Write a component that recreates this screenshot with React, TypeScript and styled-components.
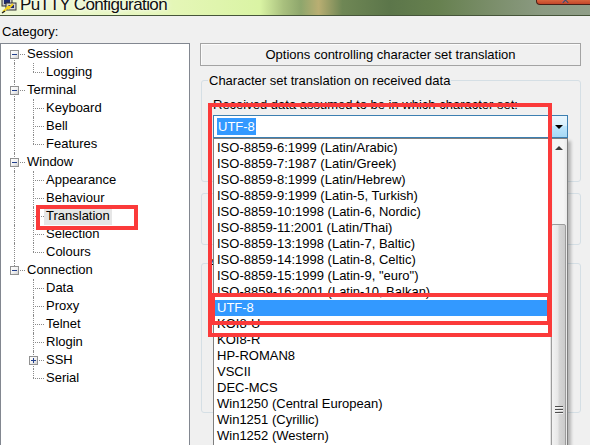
import React from "react";
import styled, { createGlobalStyle } from "styled-components";

type TreeNode = { label: string; children: string[] };

const tree: TreeNode[] = [
  { label: "Session", children: ["Logging"] },
  { label: "Terminal", children: ["Keyboard", "Bell", "Features"] },
  {
    label: "Window",
    children: ["Appearance", "Behaviour", "Translation", "Selection", "Colours"],
  },
  {
    label: "Connection",
    children: ["Data", "Proxy", "Telnet", "Rlogin", "SSH", "Serial"],
  },
];

const collapsed = ["SSH"];
const selectedNode = "Translation";

const charsets = [
  "ISO-8859-6:1999 (Latin/Arabic)",
  "ISO-8859-7:1987 (Latin/Greek)",
  "ISO-8859-8:1999 (Latin/Hebrew)",
  "ISO-8859-9:1999 (Latin-5, Turkish)",
  "ISO-8859-10:1998 (Latin-6, Nordic)",
  "ISO-8859-11:2001 (Latin/Thai)",
  "ISO-8859-13:1998 (Latin-7, Baltic)",
  "ISO-8859-14:1998 (Latin-8, Celtic)",
  'ISO-8859-15:1999 (Latin-9, "euro")',
  "ISO-8859-16:2001 (Latin-10, Balkan)",
  "UTF-8",
  "KOI8-U",
  "KOI8-R",
  "HP-ROMAN8",
  "VSCII",
  "DEC-MCS",
  "Win1250 (Central European)",
  "Win1251 (Cyrillic)",
  "Win1252 (Western)",
  "Win1253 (Greek)",
  "Win1254 (Turkish)",
];

const current = "UTF-8";

const PuttyIcon = () => (
  <svg width="16" height="16" viewBox="0 0 16 16">
    <rect x="1" y="-2" width="10" height="8" fill="#c9c9c9" stroke="#333" />
    <rect x="3" y="0" width="6" height="4" fill="#1d2a6e" />
    <rect x="5" y="3" width="10" height="7" fill="#d6d6d6" stroke="#333" />
    <rect x="7" y="5" width="6" height="3" fill="#1d2a6e" />
    <path d="M2 12 L8 6 L7 9 L12 4" stroke="#f5d21c" strokeWidth="2" fill="none" />
    <path d="M1 13 L4 11" stroke="#222" strokeWidth="1.4" />
  </svg>
);

const App = () => {
  return (
    <Window>
      <GlobalStyle />
      <TitleBar>
        <IconSlot>
          <PuttyIcon />
        </IconSlot>
        <TitleText>PuTTY Configuration</TitleText>
        <CloseButton>
          <CloseGlyph>×</CloseGlyph>
        </CloseButton>
      </TitleBar>

      <Content>
        <CategoryLabel>Category:</CategoryLabel>
        <Panes>
          <TreeBox>
            {tree.map((node, i) => {
              const first = i === 0;
              const lastTop = i === tree.length - 1;
              return (
                <React.Fragment key={node.label}>
                  <TreeRow>
                    <Guide $w={24} $x={13} $up={!first} $down={!lastTop} $arm>
                      <Expander $at={9} />
                    </Guide>
                    <NodeText>{node.label}</NodeText>
                  </TreeRow>
                  {node.children.map((child, j) => {
                    const lastChild = j === node.children.length - 1;
                    return (
                      <TreeRow key={child}>
                        <Guide $w={28} $x={13} $up={!lastTop} $down={!lastTop} />
                        <Guide $w={15} $x={4} $up $down={!lastChild} $arm>
                          {collapsed.includes(child) && <Expander $at={0} $plus />}
                        </Guide>
                        <NodeText $selected={child === selectedNode}>{child}</NodeText>
                      </TreeRow>
                    );
                  })}
                </React.Fragment>
              );
            })}
          </TreeBox>

          <Settings>
            <PanelTitle>Options controlling character set translation</PanelTitle>

            <GroupBox $mt={6} $h={110}>
              <Legend>Character set translation on received data</Legend>
              <GroupInner $pt={8}>
                <FieldLabel>Received data assumed to be in which character set:</FieldLabel>
                <Combo>
                  <ComboField>
                    <SelectedText>{current}</SelectedText>
                  </ComboField>
                  <ComboButton>
                    <ArrowDown />
                  </ComboButton>
                  <DropList>
                    <Items>
                      {charsets.map((name) => (
                        <Item key={name} $active={name === current}>
                          {name}
                        </Item>
                      ))}
                    </Items>
                    <ScrollBar>
                      <ScrollButton>
                        <ArrowUp />
                      </ScrollButton>
                      <ScrollTrack />
                      <ScrollThumb>
                        <Grip />
                        <Grip />
                        <Grip />
                      </ScrollThumb>
                    </ScrollBar>
                  </DropList>
                </Combo>
                <Note>
                  (Codepages supported by Windows but not listed here, such as CP866 on
                  many systems, can be entered manually)
                </Note>
              </GroupInner>
            </GroupBox>

            <GroupBox $mt={11} $h={52}>
              <GroupInner $pt={8}>
                <Note>Treat CJK ambiguous characters as wide</Note>
                <Note>Caps Lock acts as Cyrillic switch</Note>
              </GroupInner>
            </GroupBox>

            <GroupBox $mt={10} $h={158}>
              <Legend>Adjust how PuTTY handles line drawing characters</Legend>
              <GroupInner $pt={6}>
                <Note>Handling of line drawing characters:</Note>
              </GroupInner>
            </GroupBox>
          </Settings>
        </Panes>
      </Content>

      <Mark $x={208} $y={103} $w={344} $h={234} />
      <Mark $x={211} $y={293} $w={340} $h={32} />
      <Mark $x={36} $y={205} $w={102} $h={25} />
    </Window>
  );
};

const GlobalStyle = createGlobalStyle`
  html, body {
    margin: 0;
    padding: 0;
  }
  body {
    width: 590px;
    height: 445px;
    overflow: hidden;
    background: #f0f0f0;
    font-family: "Liberation Sans", Arial, sans-serif;
    font-size: 13px;
    color: #000;
  }
`;

const Window = styled.div`
  position: relative;
  width: 590px;
  height: 445px;
  overflow: hidden;
  background: #f0f0f0;
`;

const TitleBar = styled.div`
  display: flex;
  align-items: flex-end;
  height: 15px;
  overflow: hidden;
  border-bottom: 1px solid #46553a;
  background: linear-gradient(
    90deg,
    #eef7d6 0%,
    #e4f6b6 30%,
    #daf4a4 44%,
    #a9c07e 48%,
    #8ea66c 51%,
    #b9ae72 54%,
    #6f8755 58%,
    #5c764a 66%,
    #66804f 74%,
    #7c8f6c 84%,
    #8b9a82 92%,
    #909e88 100%
  );
`;

const IconSlot = styled.div`
  width: 16px;
  height: 15px;
  margin-left: 1px;
  align-self: flex-start;
  overflow: hidden;
`;

const TitleText = styled.span`
  margin-left: 3px;
  font-size: 17px;
  line-height: 16px;
  letter-spacing: -0.6px;
  margin-bottom: 2px;
  color: #111;
  text-shadow: 0 0 6px #fff, 0 0 3px #fff;
  white-space: nowrap;
`;

const CloseButton = styled.div`
  align-self: flex-start;
  margin-left: auto;
  margin-right: -4px;
  width: 58px;
  height: 5px;
  box-sizing: border-box;
  border: 1px solid #4a1f17;
  border-top: none;
  border-radius: 0 0 4px 4px;
  background: linear-gradient(#d9643d, #c2462a);
  display: flex;
  justify-content: center;
  overflow: hidden;
`;

const CloseGlyph = styled.span`
  font-size: 14px;
  line-height: 6px;
  color: #3b4e7e;
  margin-top: -3px;
`;

const Content = styled.div`
  padding-top: 8px;
`;

const CategoryLabel = styled.div`
  margin-left: 2px;
  line-height: 15px;
  margin-bottom: 4px;
`;

const Panes = styled.div`
  display: flex;
  align-items: flex-start;
`;

const TreeBox = styled.div`
  width: 190px;
  height: 420px;
  box-sizing: border-box;
  flex: none;
  border: 1px solid #828790;
  background: #fff;
  padding-top: 1px;
`;

const TreeRow = styled.div`
  display: flex;
  align-items: center;
  height: 18px;
`;

const Guide = styled.span<{
  $w: number;
  $x: number;
  $up?: boolean;
  $down?: boolean;
  $arm?: boolean;
}>`
  position: relative;
  flex: none;
  width: ${(p) => p.$w}px;
  height: 18px;
  display: flex;
  align-items: center;

  &::before {
    content: "";
    display: ${(p) => (p.$up || p.$down ? "block" : "none")};
    position: absolute;
    left: ${(p) => p.$x}px;
    top: ${(p) => (p.$up ? 0 : 9)}px;
    bottom: ${(p) => (p.$down ? 0 : 9)}px;
    border-left: 1px dotted #8a8a8a;
  }

  &::after {
    content: "";
    display: ${(p) => (p.$arm ? "block" : "none")};
    position: absolute;
    left: ${(p) => p.$x}px;
    right: 0;
    top: 9px;
    border-top: 1px dotted #8a8a8a;
  }
`;

const Expander = styled.span<{ $at: number; $plus?: boolean }>`
  position: relative;
  z-index: 1;
  margin-left: ${(p) => p.$at}px;
  width: 9px;
  height: 9px;
  box-sizing: border-box;
  border: 1px solid #919191;
  background: linear-gradient(135deg, #ffffff 0%, #f2f2f2 50%, #d2d2d2 100%);

  &::before {
    content: "";
    position: absolute;
    left: 1px;
    top: 3px;
    width: 5px;
    height: 1px;
    background: #23408c;
  }

  &::after {
    content: "";
    display: ${(p) => (p.$plus ? "block" : "none")};
    position: absolute;
    left: 3px;
    top: 1px;
    width: 1px;
    height: 5px;
    background: #23408c;
  }
`;

const NodeText = styled.span<{ $selected?: boolean }>`
  padding: 0 2px;
  line-height: 18px;
  white-space: nowrap;
  background: ${(p) => (p.$selected ? "#e6e6e6" : "transparent")};
`;

const Settings = styled.div`
  flex: 1;
  min-width: 0;
  padding: 0 9px 0 10px;
  display: flex;
  flex-direction: column;
`;

const PanelTitle = styled.div`
  height: 23px;
  box-sizing: border-box;
  border: 1px solid #a3a3a3;
  box-shadow: inset 1px 1px 0 #fbfbfb;
  display: flex;
  align-items: center;
  justify-content: center;
  line-height: 21px;
`;

const GroupBox = styled.fieldset<{ $mt: number; $h: number }>`
  margin: ${(p) => p.$mt}px 0 0 1px;
  padding: 0;
  min-width: 0;
  height: ${(p) => p.$h}px;
  box-sizing: border-box;
  border: 1px solid #d5dfe5;
  border-radius: 3px;
`;

const Legend = styled.legend`
  margin-left: 6px;
  padding: 0 1px;
  line-height: 17px;
  white-space: nowrap;
`;

const GroupInner = styled.div<{ $pt: number }>`
  padding: ${(p) => p.$pt}px 12px 0 11px;
`;

const FieldLabel = styled.div`
  line-height: 15px;
  white-space: nowrap;
`;

const Note = styled.div`
  line-height: 15px;
  margin-top: 8px;
`;

const Combo = styled.div`
  position: relative;
  margin-top: 3px;
  height: 23px;
  display: flex;
  box-sizing: border-box;
  border: 1px solid #3c7fb1;
  background: #fff;
`;

const ComboField = styled.div`
  flex: 1;
  display: flex;
  align-items: center;
  padding-left: 3px;
`;

const SelectedText = styled.span`
  background: #3399ff;
  color: #fff;
  padding: 0 1px;
  line-height: 17px;
`;

const ComboButton = styled.div`
  width: 18px;
  box-sizing: border-box;
  border-left: 1px solid #3c7fb1;
  background: linear-gradient(#eaf6fd 0%, #d9f0fc 45%, #bee6fd 50%, #a7d9f5 100%);
  display: flex;
  align-items: center;
  justify-content: center;
`;

const ArrowDown = styled.span`
  width: 0;
  height: 0;
  border-left: 4px solid transparent;
  border-right: 4px solid transparent;
  border-top: 4px solid #000;
`;

const DropList = styled.div`
  position: absolute;
  z-index: 5;
  top: calc(100% + 1px);
  left: -1px;
  right: -1px;
  height: 330px;
  box-sizing: border-box;
  border: 1px solid #7f7f7f;
  background: #fff;
  display: flex;
  box-shadow: 3px 3px 3px rgba(0, 0, 0, 0.25);
`;

const Items = styled.div`
  flex: 1;
  min-width: 0;
  padding: 1px 3px 0 1px;
`;

const Item = styled.div<{ $active?: boolean }>`
  height: 16px;
  line-height: 16px;
  padding-left: 2px;
  white-space: nowrap;
  overflow: hidden;
  background: ${(p) => (p.$active ? "#3399ff" : "transparent")};
  color: ${(p) => (p.$active ? "#fff" : "#000")};
`;

const ScrollBar = styled.div`
  width: 17px;
  flex: none;
  display: flex;
  flex-direction: column;
  background: linear-gradient(90deg, #e3e3e3, #f4f4f4 20%, #f4f4f4 80%, #e8e8e8);
`;

const ScrollButton = styled.div`
  height: 17px;
  flex: none;
  display: flex;
  align-items: center;
  justify-content: center;
`;

const ArrowUp = styled.span`
  width: 0;
  height: 0;
  border-left: 4px solid transparent;
  border-right: 4px solid transparent;
  border-bottom: 4px solid #3c3c3c;
`;

const ScrollTrack = styled.div`
  height: 68px;
  flex: none;
`;

const ScrollThumb = styled.div`
  height: 370px;
  flex: none;
  box-sizing: border-box;
  margin: 0 1px;
  border: 1px solid #9b9b9b;
  border-radius: 2px;
  background: linear-gradient(90deg, #f3f3f3 0%, #e7e7e7 45%, #d6d6d6 55%, #cbcbcb 100%);
  display: flex;
  flex-direction: column;
  align-items: center;
  justify-content: center;
  gap: 2px;
`;

const Grip = styled.span`
  width: 8px;
  height: 1px;
  background: #4d4d4d;
  box-shadow: 0 1px 0 #f4f4f4;
`;

const Mark = styled.div<{ $x: number; $y: number; $w: number; $h: number }>`
  position: absolute;
  z-index: 10;
  left: ${(p) => p.$x}px;
  top: ${(p) => p.$y}px;
  width: ${(p) => p.$w}px;
  height: ${(p) => p.$h}px;
  box-sizing: border-box;
  border: 4px solid #fb3a3a;
  pointer-events: none;
`;

export default App;
